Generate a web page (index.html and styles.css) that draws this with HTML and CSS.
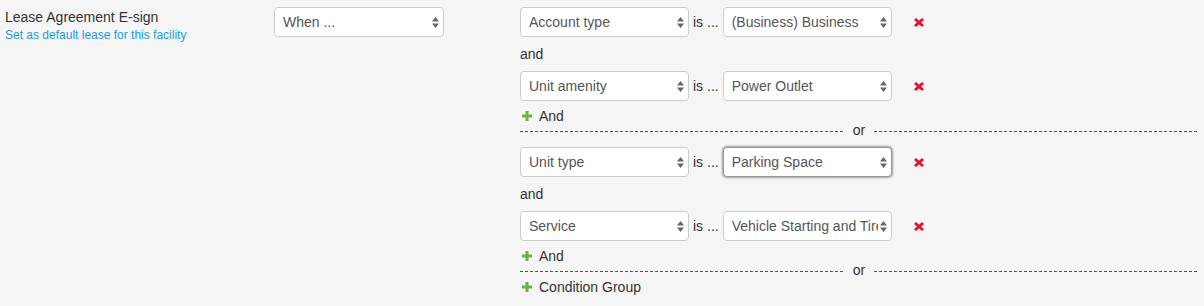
FILE: index.html
```html
<!DOCTYPE html>
<html>
<head>
<meta charset="utf-8">
<link rel="stylesheet" href="styles.css">
</head>
<body>
<div class="rule">
  <div class="label-col">
    <div class="title">Lease Agreement E-sign</div>
    <a class="link" href="#">Set as default lease for this facility</a>
  </div>
  <div class="when-col">
    <div class="select when"><span>When ...</span><svg class="arrows" width="7" height="11" viewBox="0 0 7 11"><path d="M0 4.5 L3.5 0 L7 4.5 Z M0 6.5 L3.5 11 L7 6.5 Z"/></svg></div>
  </div>
  <div class="conds">
    <div class="cond">
      <div class="select"><span>Account type</span><svg class="arrows" width="7" height="11" viewBox="0 0 7 11"><path d="M0 4.5 L3.5 0 L7 4.5 Z M0 6.5 L3.5 11 L7 6.5 Z"/></svg></div>
      <span class="is">is ...</span>
      <div class="select"><span>(Business) Business</span><svg class="arrows" width="7" height="11" viewBox="0 0 7 11"><path d="M0 4.5 L3.5 0 L7 4.5 Z M0 6.5 L3.5 11 L7 6.5 Z"/></svg></div>
      <svg class="remove" width="10" height="9" viewBox="0 0 10 9"><path d="M1 1 L9 8 M9 1 L1 8"/></svg>
    </div>
    <div class="and">and</div>
    <div class="cond">
      <div class="select"><span>Unit amenity</span><svg class="arrows" width="7" height="11" viewBox="0 0 7 11"><path d="M0 4.5 L3.5 0 L7 4.5 Z M0 6.5 L3.5 11 L7 6.5 Z"/></svg></div>
      <span class="is">is ...</span>
      <div class="select"><span>Power Outlet</span><svg class="arrows" width="7" height="11" viewBox="0 0 7 11"><path d="M0 4.5 L3.5 0 L7 4.5 Z M0 6.5 L3.5 11 L7 6.5 Z"/></svg></div>
      <svg class="remove" width="10" height="9" viewBox="0 0 10 9"><path d="M1 1 L9 8 M9 1 L1 8"/></svg>
    </div>
    <div class="add"><svg class="plus" width="10" height="10" viewBox="0 0 10 10"><path d="M0 3.5 H10 V6.5 H0 Z M3.5 0 H6.5 V10 H3.5 Z"/></svg><span>And</span></div>
    <div class="divider"><span class="dash"></span><span class="or">or</span><span class="dash"></span></div>

    <div class="cond">
      <div class="select"><span>Unit type</span><svg class="arrows" width="7" height="11" viewBox="0 0 7 11"><path d="M0 4.5 L3.5 0 L7 4.5 Z M0 6.5 L3.5 11 L7 6.5 Z"/></svg></div>
      <span class="is">is ...</span>
      <div class="select focused"><span>Parking Space</span><svg class="arrows" width="7" height="11" viewBox="0 0 7 11"><path d="M0 4.5 L3.5 0 L7 4.5 Z M0 6.5 L3.5 11 L7 6.5 Z"/></svg></div>
      <svg class="remove" width="10" height="9" viewBox="0 0 10 9"><path d="M1 1 L9 8 M9 1 L1 8"/></svg>
    </div>
    <div class="and">and</div>
    <div class="cond">
      <div class="select"><span>Service</span><svg class="arrows" width="7" height="11" viewBox="0 0 7 11"><path d="M0 4.5 L3.5 0 L7 4.5 Z M0 6.5 L3.5 11 L7 6.5 Z"/></svg></div>
      <span class="is">is ...</span>
      <div class="select"><span>Vehicle Starting and Tire Service</span><svg class="arrows" width="7" height="11" viewBox="0 0 7 11"><path d="M0 4.5 L3.5 0 L7 4.5 Z M0 6.5 L3.5 11 L7 6.5 Z"/></svg></div>
      <svg class="remove" width="10" height="9" viewBox="0 0 10 9"><path d="M1 1 L9 8 M9 1 L1 8"/></svg>
    </div>
    <div class="add"><svg class="plus" width="10" height="10" viewBox="0 0 10 10"><path d="M0 3.5 H10 V6.5 H0 Z M3.5 0 H6.5 V10 H3.5 Z"/></svg><span>And</span></div>
    <div class="divider last"><span class="dash"></span><span class="or">or</span><span class="dash"></span></div>
    <div class="add group-add"><svg class="plus" width="10" height="10" viewBox="0 0 10 10"><path d="M0 3.5 H10 V6.5 H0 Z M3.5 0 H6.5 V10 H3.5 Z"/></svg><span>Condition Group</span></div>
  </div>
</div>
</body>
</html>
```

FILE: styles.css
```css
html, body {
  margin: 0;
  padding: 0;
  background: #f5f5f5;
}
body {
  font-family: "Liberation Sans", Arial, sans-serif;
  font-size: 14px;
  color: #333;
  padding-top: 7px;
}
.rule {
  display: flex;
  align-items: flex-start;
}
.label-col {
  width: 269px;
  padding-left: 5px;
}
.title {
  font-size: 14px;
  line-height: 20px;
  color: #333;
}
.link {
  display: block;
  font-size: 12px;
  line-height: 16px;
  color: #1b9dd9;
  text-decoration: none;
}
.when-col {
  width: 246px;
}
.select {
  box-sizing: border-box;
  width: 169px;
  height: 30px;
  background: #fff;
  border: 1px solid #ccc;
  border-radius: 4px;
  padding: 0 4px 0 8px;
  display: flex;
  align-items: center;
  justify-content: space-between;
  color: #555;
  line-height: 20px;
  white-space: nowrap;
}
.select span {
  overflow: hidden;
  flex: 1;
}
.select.when {
  width: 170px;
}
.select.focused {
  border-color: #999;
  box-shadow: 0 0 2px 1px rgba(0, 0, 0, 0.35);
}
.arrows {
  flex: none;
  fill: #666;
  margin-left: 2px;
}
.conds {
  width: 678px;
}
.cond {
  display: flex;
  align-items: center;
  height: 30px;
}
.is {
  margin: 0 4px;
  line-height: 20px;
}
.remove {
  margin-left: 22px;
  stroke: #e3122c;
  stroke-width: 2.8;
  fill: none;
}
.and {
  height: 34px;
  line-height: 34px;
}
.add {
  display: flex;
  align-items: center;
  box-sizing: border-box;
  height: 22px;
  padding-top: 7px;
  line-height: 16px;
}
.add .plus {
  fill: #70b33b;
  margin: 0 7px 0 2px;
}
.group-add {
  height: 16px;
  padding-top: 0;
}
.divider {
  display: flex;
  align-items: center;
  height: 16px;
  margin-bottom: 8px;
}
.divider.last {
  margin-bottom: 0;
}
.dash {
  flex: 1;
  height: 1px;
  background: repeating-linear-gradient(to right, #555 0 3px, transparent 3px 5px);
}
.or {
  margin: 0 9px;
  line-height: 16px;
  position: relative;
  top: -1px;
}
```
